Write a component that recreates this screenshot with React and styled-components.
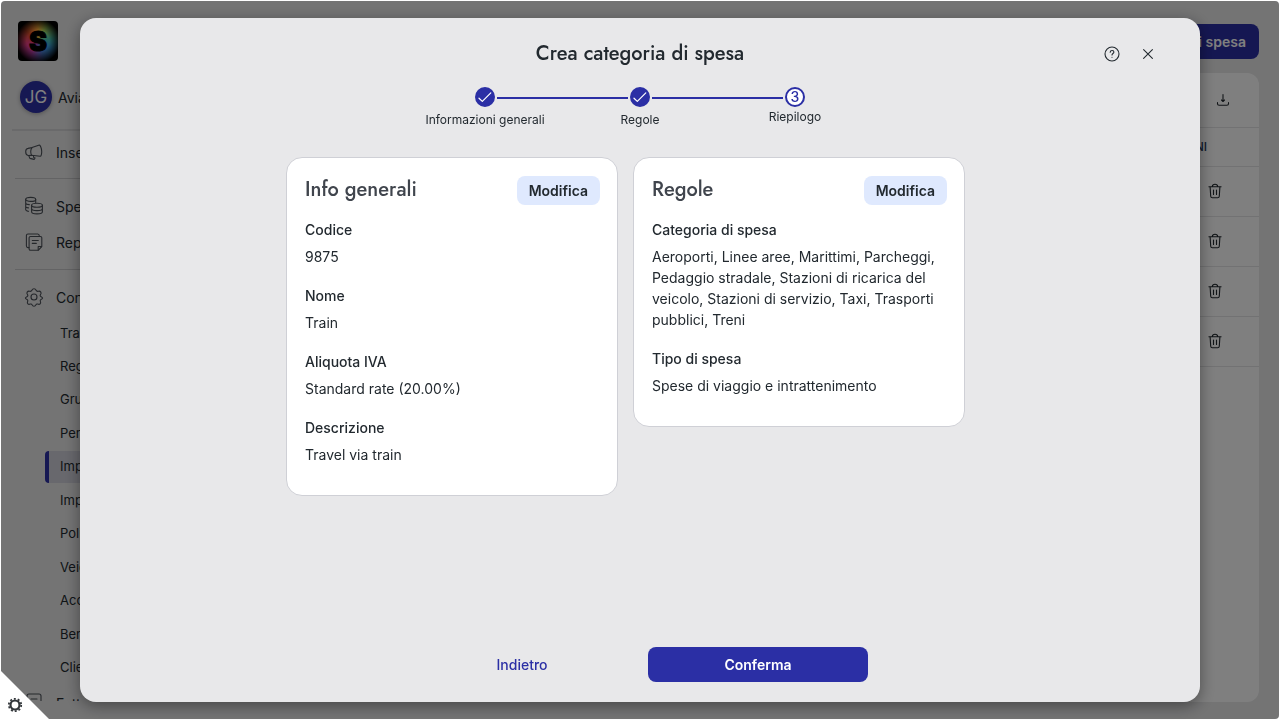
import styled, { createGlobalStyle } from "styled-components";

const GlobalStyle = createGlobalStyle`
  * {
    box-sizing: border-box;
  }
  body {
    margin: 0;
    background: #fff;
    color: #22292f;
    font-family: Inter, "Liberation Sans", sans-serif;
    font-size: 14px;
    line-height: 21px;
  }
  button {
    font: inherit;
    color: inherit;
    border: none;
    padding: 0;
    background: none;
    cursor: pointer;
  }
  a {
    color: inherit;
    text-decoration: none;
  }
  svg {
    display: block;
    flex: none;
  }
`;

const Shell = styled.div`
  display: flex;
  height: calc(100vh - 2px);
  margin: 1px;
  border-radius: 4px;
  overflow: hidden;
  background: #e8e8e9;
`;

const Sidebar = styled.aside`
  display: flex;
  flex-direction: column;
  width: 240px;
  flex: none;
  padding: 20px 11px 18px;
`;

const Logo = styled.a`
  display: flex;
  align-items: center;
  justify-content: center;
  width: 40px;
  height: 40px;
  margin-left: 6px;
  border-radius: 4px;
  background: radial-gradient(circle, transparent 40%, #000 78%),
    conic-gradient(#ffb03a, #b5e05c 30deg, #48c8b4 80deg, #3ba4ec 120deg, #4a7bd0 160deg, #c03ca8 210deg, #ef3f8a 255deg, #e0502c 310deg, #ffb03a);
  color: #000;
  font-size: 27px;
  font-weight: 900;
  -webkit-text-stroke: 1px #000;
`;

const Profile = styled.div`
  display: flex;
  align-items: center;
  gap: 6px;
  margin-top: 20px;
  padding: 0 0 16px 8px;
  border-bottom: 2px solid #d4d4d6;
`;

const Avatar = styled.span`
  display: flex;
  align-items: center;
  justify-content: center;
  width: 32px;
  height: 32px;
  border-radius: 50%;
  background: #2d30a6;
  color: #fff;
  font-size: 17px;
  box-shadow: 0 1px 4px rgba(0, 0, 0, 0.3);
`;

const Menu = styled.nav`
  flex: 1;
  min-height: 0;
  overflow: hidden;
  padding-left: 3px;
`;

const MenuGroup = styled.div`
  padding: ${(props) => (props.$first ? "3px 0 8px" : "9px 0")};
  border-bottom: 1px solid #c6c6c8;
`;

const MenuLink = styled.a`
  display: flex;
  align-items: center;
  gap: 12px;
  height: 36px;
  padding-left: 9px;
  svg {
    color: #4b5057;
  }
`;

const SubMenu = styled.div`
  display: grid;
  grid-auto-rows: 1fr;
  height: 368px;
  margin-top: 2px;
  padding-left: 30px;
`;

const SubLink = styled.a`
  display: flex;
  align-items: center;
  height: 32px;
  padding-left: 11px;
  border-left: 4px solid ${(props) => (props.$selected ? "#2d30a6" : "transparent")};
  border-radius: 4px;
  background: ${(props) => (props.$selected ? "#d0d0da" : "transparent")};
  font-size: 13px;
`;

const Main = styled.main`
  flex: 1;
  display: flex;
  flex-direction: column;
  gap: 14px;
  padding: 23px 20px 17px;
`;

const PrimaryButton = styled.button`
  height: 35px;
  min-width: ${(props) => (props.$wide ? "220px" : "0")};
  padding: 0 13px;
  border-radius: 8px;
  background: #2b2fa5;
  color: #fff;
  font-weight: 600;
`;

const PageHeader = styled.header`
  display: flex;
  justify-content: flex-end;
`;

const Panel = styled.section`
  flex: 1;
  border-radius: 12px;
  background: #fff;
`;

const PanelBar = styled.div`
  display: flex;
  align-items: center;
  justify-content: flex-end;
  height: 55px;
  padding-right: 27px;
  border-bottom: 1px solid #e4e4e6;
`;

const Table = styled.table`
  width: 100%;
  border-collapse: collapse;
  th,
  td {
    height: 50px;
    padding: 0 36px;
    border-bottom: 1px solid #e4e4e6;
  }
  th {
    height: 38px;
    padding-right: 52px;
    color: #283a5c;
    font-size: 12px;
    font-weight: 500;
    text-align: right;
  }
  button {
    display: block;
    margin-left: auto;
  }
`;

const Overlay = styled.div`
  position: fixed;
  inset: 1px;
  display: flex;
  padding: 17px 79px;
  border-radius: 4px;
  background: rgba(0, 0, 0, 0.5);
`;

const Modal = styled.div`
  flex: 1;
  display: flex;
  flex-direction: column;
  padding: 20px 43px;
  border-radius: 16px;
  background: #e8e8ea;
  box-shadow: 0 4px 16px rgba(0, 0, 0, 0.4);
`;

const ModalHeader = styled.header`
  display: grid;
  grid-template-columns: 1fr auto 1fr;
  align-items: center;
  height: 32px;
`;

const Heading = styled.h2`
  grid-column: 2;
  margin: 0;
  color: ${(props) => (props.$soft ? "#40454d" : "#22292f")};
  font-family: Jost, Lato, sans-serif;
  font-size: 20px;
  font-weight: 500;
  line-height: 28px;
`;

const HeaderActions = styled.div`
  display: flex;
  justify-content: flex-end;
  gap: 18px;
`;

const IconButton = styled.button`
  display: flex;
  align-items: center;
  justify-content: center;
  width: 18px;
  height: 18px;
`;

const Stepper = styled.ol`
  display: flex;
  justify-content: center;
  gap: 2px;
  margin: 17px 0 29px;
  padding: 0;
  list-style: none;
`;

const Step = styled.li`
  display: flex;
  flex-direction: column;
  align-items: center;
  gap: ${(props) => (props.$current ? "2px" : "5px")};
  width: 20px;
  height: 41px;
  font-size: 12px;
  line-height: 16px;
  white-space: nowrap;
`;

const StepLine = styled.li`
  width: 131px;
  height: 2px;
  margin-top: 10px;
  background: #2b2fa5;
`;

const StepDot = styled.span`
  display: flex;
  align-items: center;
  justify-content: center;
  width: 20px;
  height: 20px;
  flex: none;
  border: 2px solid #2b2fa5;
  border-radius: 50%;
  background: ${(props) => (props.$current ? "#fff" : "#2b2fa5")};
  color: ${(props) => (props.$current ? "#2b2fa5" : "#fff")};
  font-size: 14px;
  font-weight: 500;
`;

const Cards = styled.div`
  display: grid;
  grid-template-columns: repeat(2, 332px);
  align-items: start;
  gap: 15px;
  width: 708px;
  max-width: 100%;
  margin: 0 auto;
`;

const Card = styled.section`
  padding: 18px 17px 12px 18px;
  border: 1px solid #cfd0d6;
  border-radius: 16px;
  background: #fff;
`;

const CardHeader = styled.div`
  display: flex;
  align-items: flex-start;
  justify-content: space-between;
  margin-bottom: 14px;
`;

const EditButton = styled.button`
  height: 29px;
  padding: 0 12px;
  border-radius: 8px;
  background: #dfe9fe;
  font-weight: 600;
`;

const Fields = styled.dl`
  margin: 0;
  dt {
    margin-bottom: 6px;
    font-weight: 500;
  }
  dd {
    margin: 0 0 18px;
  }
`;

const ModalFooter = styled.footer`
  display: flex;
  justify-content: center;
  gap: 16px;
  margin-top: auto;
`;

const BackButton = styled.button`
  width: 220px;
  height: 35px;
  color: #2b2fa5;
  font-weight: 500;
`;

const CornerButton = styled.button`
  position: fixed;
  left: 0;
  bottom: 0;
  display: flex;
  align-items: flex-end;
  width: 50px;
  height: 50px;
  padding: 0 0 7px 7px;
  background: #fff;
  clip-path: polygon(0 0, 100% 100%, 0 100%);
`;

const Icon = ({ size = 20, stroke = 1.1, children }) => (
  <svg
    width={size}
    height={size}
    viewBox={`0 0 ${size} ${size}`}
    fill="none"
    stroke="currentColor"
    strokeWidth={stroke}
    strokeLinecap="round"
    strokeLinejoin="round"
    aria-hidden="true"
  >
    {children}
  </svg>
);

const MegaphoneIcon = () => (
  <Icon>
    <path d="M8 5.600 15.400 3.100c.8 0 2.200 3 2.300 6.200.1 2.800-.6 5-1.500 5L7.500 13.200 4.200 13.500C2.600 13.300 1.700 11.500 1.700 9.800c0-1.800.9-3.200 2.300-3.400z" />
    <path d="M8 5.600C6.700 7.500 6.600 11 7.500 13.200M4.700 13.500l1.200 2.900 4.200 1 1-1.400-1.400-.5-.3-1.800" />
  </Icon>
);

const CoinsIcon = () => (
  <Icon>
    <ellipse cx="6.700" cy="3.400" rx="5" ry="2" />
    <path d="M1.700 3.400v10.400c0 .8 1 1.300 2.700 1.600M1.700 6.900c0 .8 1.400 1.500 3.600 1.700M1.700 10.400c0 .7 1.100 1.300 2.800 1.500M11.700 3.400v3" />
    <ellipse cx="13" cy="9.200" rx="5.400" ry="2" />
    <path d="M7.600 9.200v6.600c0 1.200 2.400 2.100 5.400 2.100s5.400-.9 5.400-2.100V9.200M7.600 12.500c0 1.200 2.400 2.100 5.400 2.100s5.400-.9 5.400-2.100" />
  </Icon>
);

const ReportIcon = () => (
  <Icon>
    <path d="M6.500 4.500h10c.8 0 1.300.5 1.300 1.300v8.700l-3.600 3.800H6.500c-.9 0-1.400-.5-1.400-1.300V5.800c0-.8.5-1.300 1.400-1.300z" />
    <path d="M17.500 14.500h-3.300v3.500M8.300 8.500h6M8.300 11.400h4M5 15.600H4c-1 0-1.600-.6-1.600-1.600V3.600C2.400 2.600 3 2 4 2h9.800c1 0 1.500.8 1.600 2.300" />
  </Icon>
);

const CogIcon = () => (
  <Icon>
    <circle cx="10" cy="10" r="3" />
    <path d="M10 1.800c1.300 0 1.700.5 2.100 1.400.4.900 1.300 1.300 2.300 1 1.200-.3 1.800 0 2.400.9.600 1 .5 1.600-.3 2.500-.6.800-.4 1.500.4 2 1 .5 1.700.8 1.700 1.400 0 .7-.6 1-1.600 1.500-.8.400-1 1.200-.6 2 .5 1.100.4 1.700-.3 2.300-.6.700-1.300.7-2.300.3-.9-.3-1.600 0-1.900.8-.4 1-.9 1.400-1.900 1.400s-1.500-.4-1.900-1.400c-.3-.8-1-1.100-1.900-.8-1 .4-1.700.4-2.300-.3-.7-.6-.8-1.200-.3-2.300.4-.8.200-1.600-.6-2-1-.5-1.600-.8-1.600-1.500 0-.6.700-.9 1.700-1.400.8-.5 1-1.200.4-2-.8-.9-.9-1.500-.3-2.500.6-.9 1.200-1.200 2.400-.9 1 .3 1.900-.1 2.300-1 .4-.9.800-1.400 2.100-1.400z" />
  </Icon>
);

const InvoiceIcon = () => (
  <Icon>
    <rect x="3" y="1" width="14" height="18" rx="2" />
    <path d="M7 6h6M7 9h6" />
  </Icon>
);

const TrashIcon = () => (
  <Icon size={16}>
    <path d="M1.900 3.700h12.200M5.300 3.500c.1-1.400 1.100-2.200 2.700-2.200s2.600.8 2.700 2.200M3.100 3.900l.6 9.300c.1 1 .6 1.500 1.600 1.500h5.400c1 0 1.500-.5 1.600-1.500l.6-9.300M6.500 7v4.500M9.500 7v4.500" />
  </Icon>
);

const DownloadIcon = () => (
  <Icon size={14}>
    <path d="M7 1.500v7M5.500 7l1.500 1.500L8.500 7M1.500 9.500v1.200c0 1.100.6 1.600 1.600 1.600h7.800c1 0 1.600-.5 1.600-1.600V9.500" />
  </Icon>
);

const HelpIcon = () => (
  <Icon size={16}>
    <circle cx="8" cy="8" r="7" />
    <path d="M6.200 6.300c.1-1.100.8-1.800 1.900-1.800s1.800.7 1.800 1.600c0 1.400-1.900 1.400-1.900 2.900M8 11.200v.1" />
  </Icon>
);

const CloseIcon = () => (
  <Icon size={16}>
    <path d="m3.600 3.600 8.800 8.800M12.400 3.600l-8.800 8.800" />
  </Icon>
);

const CheckIcon = () => (
  <Icon size={16} stroke={1.2}>
    <path d="m2 9.200 3.300 3.200 8.500-8.500" />
  </Icon>
);

const GearIcon = () => (
  <svg width="16" height="16" viewBox="0 0 16 16" fill="none" stroke="#33373b" aria-hidden="true">
    <circle cx="8" cy="8" r="4.500" strokeWidth="2.200" />
    <circle cx="8" cy="8" r="6.200" strokeWidth="1.800" strokeDasharray="1.950 1.950" />
  </svg>
);

const subLinks = [
  "Tracciamento",
  "Regole",
  "Gruppi",
  "Persone",
  "Impostazioni di spesa",
  "Impostazioni aziendali",
  "Politiche",
  "Veicoli",
  "Account",
  "Beneficiari",
  "Clienti",
];

const rows = [1, 2, 3, 4];

const general = [
  { label: "Codice", value: "9875" },
  { label: "Nome", value: "Train" },
  { label: "Aliquota IVA", value: "Standard rate (20.00%)" },
  { label: "Descrizione", value: "Travel via train" },
];

const rules = [
  {
    label: "Categoria di spesa",
    value:
      "Aeroporti, Linee aree, Marittimi, Parcheggi, Pedaggio stradale, Stazioni di ricarica del veicolo, Stazioni di servizio, Taxi, Trasporti pubblici, Treni",
  },
  { label: "Tipo di spesa", value: "Spese di viaggio e intrattenimento" },
];

const SummaryCard = ({ title, fields }) => (
  <Card>
    <CardHeader>
      <Heading as="h3" $soft>
        {title}
      </Heading>
      <EditButton type="button">Modifica</EditButton>
    </CardHeader>
    <Fields>
      {fields.map((field) => (
        <div key={field.label}>
          <dt>{field.label}</dt>
          <dd>{field.value}</dd>
        </div>
      ))}
    </Fields>
  </Card>
);

const App = () => {
  return (
    <>
      <GlobalStyle />
      <Shell>
        <Sidebar>
          <Logo href="#">S</Logo>
          <Profile>
            <Avatar>JG</Avatar>
            Aviato
          </Profile>
          <Menu>
            <MenuGroup $first>
              <MenuLink href="#">
                <MegaphoneIcon />
                Inserisci spesa
              </MenuLink>
            </MenuGroup>
            <MenuGroup>
              <MenuLink href="#">
                <CoinsIcon />
                Spese
              </MenuLink>
              <MenuLink href="#">
                <ReportIcon />
                Report
              </MenuLink>
            </MenuGroup>
            <MenuGroup>
              <MenuLink href="#">
                <CogIcon />
                Configurazione
              </MenuLink>
              <SubMenu>
                {subLinks.map((text, i) => (
                  <SubLink key={text} href="#" $selected={i === 4}>
                    {text}
                  </SubLink>
                ))}
              </SubMenu>
              <MenuLink href="#">
                <InvoiceIcon />
                Fatture
              </MenuLink>
            </MenuGroup>
          </Menu>
        </Sidebar>
        <Main>
          <PageHeader>
            <PrimaryButton type="button">Crea categoria di spesa</PrimaryButton>
          </PageHeader>
          <Panel>
            <PanelBar>
              <IconButton type="button" aria-label="Scarica">
                <DownloadIcon />
              </IconButton>
            </PanelBar>
            <Table>
              <thead>
                <tr>
                  <th>AZIONI</th>
                </tr>
              </thead>
              <tbody>
                {rows.map((row) => (
                  <tr key={row}>
                    <td>
                      <button type="button" aria-label="Elimina">
                        <TrashIcon />
                      </button>
                    </td>
                  </tr>
                ))}
              </tbody>
            </Table>
          </Panel>
        </Main>
      </Shell>

      <Overlay>
        <Modal role="dialog" aria-modal="true" aria-labelledby="modal-title">
          <ModalHeader>
            <Heading id="modal-title">Crea categoria di spesa</Heading>
            <HeaderActions>
              <IconButton type="button" aria-label="Aiuto">
                <HelpIcon />
              </IconButton>
              <IconButton type="button" aria-label="Chiudi">
                <CloseIcon />
              </IconButton>
            </HeaderActions>
          </ModalHeader>
          <Stepper>
            <Step>
              <StepDot>
                <CheckIcon />
              </StepDot>
              Informazioni generali
            </Step>
            <StepLine aria-hidden="true" />
            <Step>
              <StepDot>
                <CheckIcon />
              </StepDot>
              Regole
            </Step>
            <StepLine aria-hidden="true" />
            <Step $current>
              <StepDot $current>3</StepDot>
              Riepilogo
            </Step>
          </Stepper>
          <Cards>
            <SummaryCard title="Info generali" fields={general} />
            <SummaryCard title="Regole" fields={rules} />
          </Cards>
          <ModalFooter>
            <BackButton type="button">Indietro</BackButton>
            <PrimaryButton type="button" $wide>
              Conferma
            </PrimaryButton>
          </ModalFooter>
        </Modal>
      </Overlay>

      <CornerButton type="button" aria-label="Impostazioni">
        <GearIcon />
      </CornerButton>
    </>
  );
};

export default App;
